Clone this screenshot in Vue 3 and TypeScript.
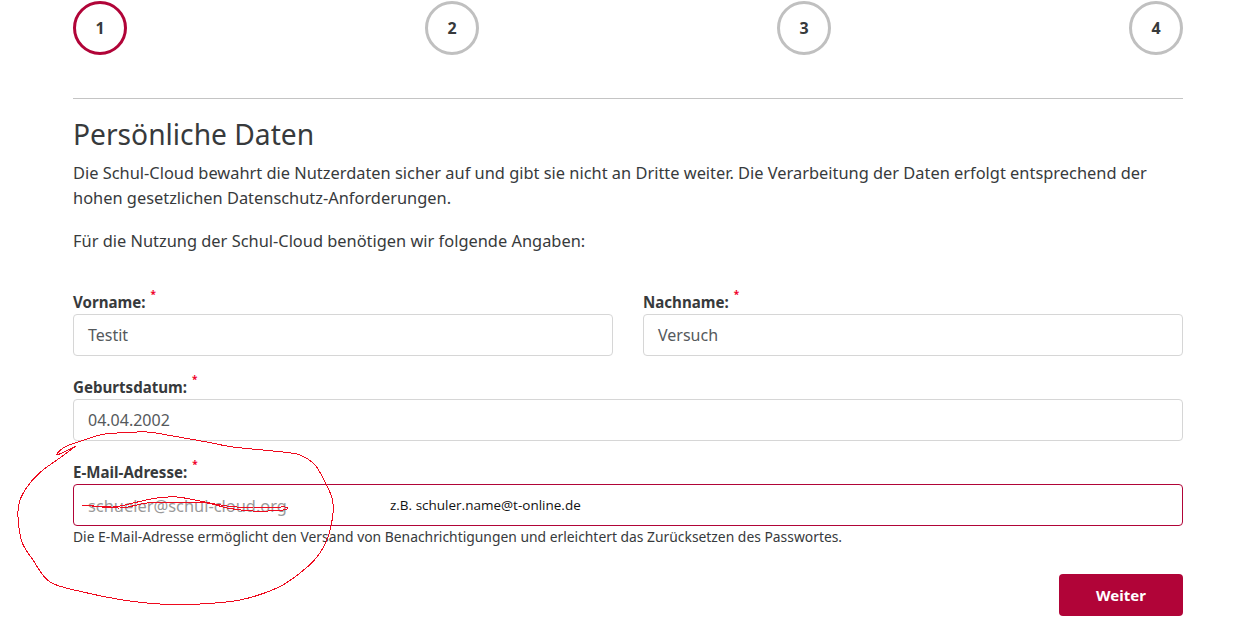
<script setup lang="ts">
const steps = [1, 2, 3, 4];

type Pt = [number, number];

const loop: Pt[] = [
  [76, 446], [57, 455], [63, 448], [75, 443], [100, 435], [117, 433], [147, 432], [167, 435],
  [207, 442], [233, 447], [283, 452], [300, 455], [315, 465], [325, 482], [332, 498], [333, 513],
  [328, 537], [317, 557], [300, 573], [277, 588], [240, 600], [200, 604], [160, 604], [123, 600],
  [83, 592], [50, 582], [33, 560], [22, 542], [18, 517], [20, 500], [30, 483], [43, 470], [57, 460], [76, 446],
];

const strike: Pt[] = [
  [82, 505], [113, 507], [133, 503], [157, 498], [177, 497], [200, 501], [227, 506], [253, 508],
  [285, 507], [283, 510], [253, 511], [227, 508], [207, 503], [177, 503], [147, 503], [120, 508], [83, 505],
];

// catmull-rom through the points, so the pen line isn't a polygon
const smooth = (pts: Pt[]): string => {
  let d = `M${pts[0][0]} ${pts[0][1]}`;
  for (let i = 0; i < pts.length - 1; i++) {
    const p0 = pts[Math.max(i - 1, 0)];
    const p1 = pts[i];
    const p2 = pts[i + 1];
    const p3 = pts[Math.min(i + 2, pts.length - 1)];
    const c1x = p1[0] + (p2[0] - p0[0]) / 6;
    const c1y = p1[1] + (p2[1] - p0[1]) / 6;
    const c2x = p2[0] - (p3[0] - p1[0]) / 6;
    const c2y = p2[1] - (p3[1] - p1[1]) / 6;
    d += ` C${c1x} ${c1y} ${c2x} ${c2y} ${p2[0]} ${p2[1]}`;
  }
  return d;
};

const scribbles = [smooth(loop), smooth(strike)];
</script>

<template>
  <div class="page">
    <div class="steps">
      <div v-for="step in steps" :key="step" class="step" :class="{ active: step === 1 }">{{ step }}</div>
    </div>
    <hr class="divider" />
    <h1 class="title">Persönliche Daten</h1>
    <p class="intro">
      Die Schul-Cloud bewahrt die Nutzerdaten sicher auf und gibt sie nicht an Dritte weiter. Die Verarbeitung der Daten erfolgt entsprechend der hohen gesetzlichen Datenschutz-Anforderungen.
    </p>
    <p class="intro second">Für die Nutzung der Schul-Cloud benötigen wir folgende Angaben:</p>

    <form class="form" @submit.prevent>
      <div class="row">
        <div class="field">
          <label class="label">Vorname:<span class="req">*</span></label>
          <div class="input">Testit</div>
        </div>
        <div class="field">
          <label class="label">Nachname:<span class="req">*</span></label>
          <div class="input">Versuch</div>
        </div>
      </div>
      <div class="field">
        <label class="label">Geburtsdatum:<span class="req">*</span></label>
        <div class="input">04.04.2002</div>
      </div>
      <div class="field">
        <label class="label">E-Mail-Adresse:<span class="req">*</span></label>
        <div class="input invalid">
          <span class="placeholder">schueler@schul-cloud.org</span>
          <span class="hint">z.B. schuler.name@t-online.de</span>
        </div>
        <small class="help">Die E-Mail-Adresse ermöglicht den Versand von Benachrichtigungen und erleichtert das Zurücksetzen des Passwortes.</small>
      </div>
      <div class="actions">
        <button class="next" type="submit">Weiter</button>
      </div>
    </form>

    <!-- hand drawn annotation on top of the screenshot -->
    <svg class="scribble" width="1235" height="631" viewBox="0 0 1235 631" fill="none">
      <path v-for="d in scribbles" :key="d" :d="d" />
    </svg>
  </div>
</template>

<style scoped>
.page {
  position: relative;
  box-sizing: border-box;
  width: 1235px;
  height: 631px;
  overflow: hidden;
  padding: 1px 52px 0 73px;
  font-family: "Noto Sans", "Open Sans", sans-serif;
  color: #373a3c;
  background: #fff;
}

.steps {
  display: flex;
  justify-content: space-between;
}

.step {
  box-sizing: border-box;
  width: 54px;
  height: 54px;
  border: 3px solid #c0c0c0;
  border-radius: 50%;
  display: flex;
  align-items: center;
  justify-content: center;
  font-size: 16px;
  font-weight: 700;
}

.step.active {
  border-color: #b10438;
}

.divider {
  margin: 43px 0 0;
  border: none;
  border-top: 1px solid #c4c4c4;
}

.title {
  margin: 16px 0 0;
  font-size: 28.2px;
  line-height: 38px;
  font-weight: 400;
}

.intro {
  margin: 7px 0 0;
  font-size: 16.4px;
  line-height: 25px;
}

.intro.second {
  margin-top: 18px;
}

.form {
  margin-top: 37px;
  display: flex;
  flex-direction: column;
  gap: 19px;
}

.row {
  display: grid;
  grid-template-columns: 1fr 1fr;
  gap: 30px;
}

.label {
  display: block;
  height: 24px;
  line-height: 24px;
  font-size: 15.1px;
  font-weight: 700;
}

.req {
  position: relative;
  top: -10px;
  left: 5px;
  color: #f0002a;
  font-size: 10px;
  font-weight: 700;
}

.input {
  box-sizing: border-box;
  height: 42px;
  padding: 0 14px;
  border: 1px solid #d6d6d6;
  border-radius: 4px;
  display: flex;
  align-items: center;
  font-size: 16px;
  color: #55595c;
}

.input.invalid {
  border-color: #b10438;
}

.placeholder {
  width: 302px;
  flex: none;
  color: #999;
  font-size: 16.4px;
  white-space: nowrap;
}

.hint {
  font-family: "Open Sans", sans-serif;
  font-size: 13.5px;
  color: #111;
}

.help {
  display: block;
  margin-top: 1px;
  font-size: 13.87px;
  line-height: 20px;
}

.actions {
  margin-top: 8px;
  display: flex;
  justify-content: flex-end;
}

.next {
  width: 124px;
  height: 42px;
  border: none;
  border-radius: 4px;
  background: #b10438;
  color: #fff;
  font-family: inherit;
  font-size: 15px;
  font-weight: 700;
}

.scribble {
  position: absolute;
  top: 0;
  left: 0;
  pointer-events: none;
}

.scribble path {
  stroke: #ee0a1e;
  stroke-width: 1;
  shape-rendering: crispEdges;
}
</style>
